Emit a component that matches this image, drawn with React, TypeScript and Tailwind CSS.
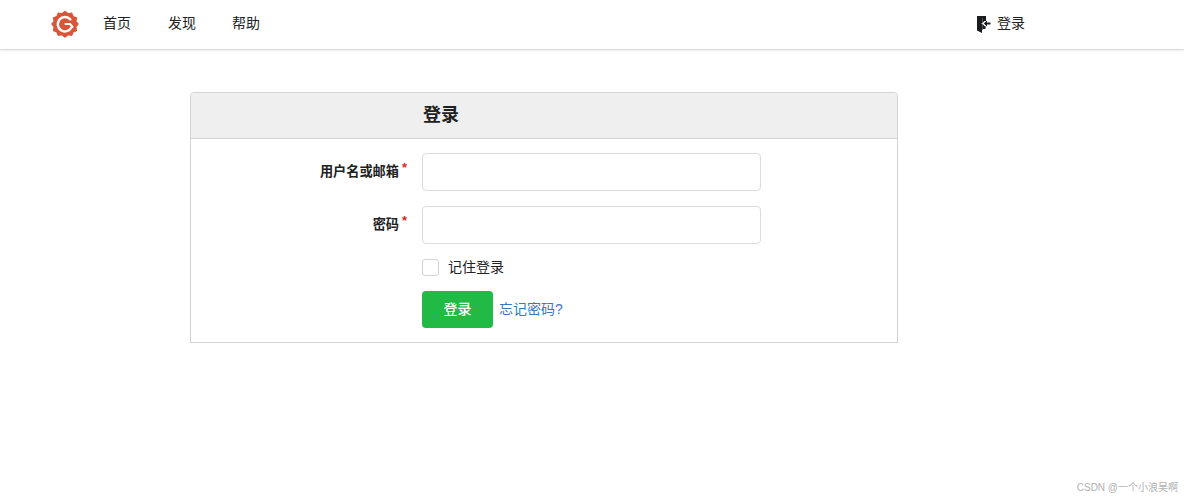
const CJK = "font-['Liberation_Sans','Noto_Sans_CJK_SC',sans-serif]";

function Logo() {
  return (
    <svg width="28" height="28" viewBox="0 0 28 28" aria-hidden>
      <path
        fill="#d9553a"
        stroke="#d9553a"
        strokeWidth="1.500"
        strokeLinejoin="round"
        d="M14 1.500l3 2.400 3.600-.7 1.400 3.400 3.400 1.400-.7 3.600L27 14l-2.300 2.900.7 3.600-3.400 1.400-1.400 3.400-3.600-.7L14 27l-3-2.400-3.600.7L6 21.900l-3.400-1.400.7-3.600L1 14l2.300-2.400-.7-3.600L6 6.600l1.400-3.400 3.600.7z"
      />
      <path
        fill="none"
        stroke="#fff"
        strokeWidth="2.400"
        strokeLinecap="round"
        d="M19.300 9.400A7.200 7.200 0 1 0 20.400 17.500"
      />
      <path fill="none" stroke="#fff" strokeWidth="2.100" strokeLinecap="round" d="M14.500 14h4.500L21.500 17" />
    </svg>
  );
}

function SignInIcon() {
  return (
    <svg width="14" height="18" viewBox="0 0 14 18" aria-hidden>
      <path fill="#1b1c1d" d="M0 1h9v5H8V2.200L5.500 3.200V7L4.500 8.500 5.500 10v5H5v3L0 15.500z" />
      <path fill="#1b1c1d" d="M5.500 1.800h3V6H7.300L5.500 8.500 7.300 11h1.200v3H5.500z" />
      <path fill="#1b1c1d" d="M6.800 8.500 10 5.600V7.500h3.500v2H10v1.900z" />
    </svg>
  );
}

function NavBar() {
  return (
    <nav className="flex h-[49px] items-center bg-white pb-[2px] pl-[51px] shadow-[0_1px_2px_rgba(0,0,0,0.2)]">
      <Logo />
      <a className="ml-[24px] text-[14px] text-[#222]">首页</a>
      <a className="ml-[37px] text-[14px] text-[#222]">发现</a>
      <a className="ml-[36px] text-[14px] text-[#222]">帮助</a>
      <a className="ml-[717px] flex items-center gap-[6px] text-[14px] text-[#222]">
        <SignInIcon />
        登录
      </a>
    </nav>
  );
}

function Field({ label }: { label: string }) {
  return (
    <div className="flex items-center">
      <label className="relative mr-[23px] w-[208px] text-right text-[13.200px] font-bold text-[#212121]">
        {label}
        <span className="absolute right-[-8px] top-[-4px] text-[13px] text-[#db2828]">*</span>
      </label>
      <input className="h-[38px] w-[339px] rounded-[4px] border border-[#dcdcdc] bg-white outline-none" />
    </div>
  );
}

export default function App() {
  return (
    <div className={`relative h-[497px] overflow-hidden bg-white ${CJK}`}>
      <NavBar />
      <main className="ml-[190px] mt-[43px] w-[708px] rounded-t-[4px] border border-[#d4d4d5] bg-white">
        <h2 className="flex h-[46px] items-center rounded-t-[4px] border-b border-[#d4d4d5] bg-[#efefef] pl-[232px] text-[18px] font-bold text-[#212121]">
          登录
        </h2>
        <form className="flex flex-col gap-[15px] pt-[14px] pb-[14px]">
          <Field label="用户名或邮箱" />
          <Field label="密码" />
          <div className="ml-[231px] flex h-[17px] items-center gap-[9px]">
            <span className="size-[17px] rounded-[3px] border border-[#d4d4d5] bg-white" />
            <span className="text-[14px] text-[#222]">记住登录</span>
          </div>
          <div className="ml-[231px] flex items-center gap-[6px]">
            <button
              type="button"
              className="h-[37px] w-[71px] rounded-[4px] bg-[#21ba45] text-[14px] font-medium text-white"
            >
              登录
            </button>
            <a className="text-[14px] text-[#3a78c3]">忘记密码?</a>
          </div>
        </form>
      </main>
      <span className="absolute bottom-[2px] right-[6px] text-[10px] text-[#b0b0b0]">CSDN @一个小浪吴啊</span>
    </div>
  );
}
